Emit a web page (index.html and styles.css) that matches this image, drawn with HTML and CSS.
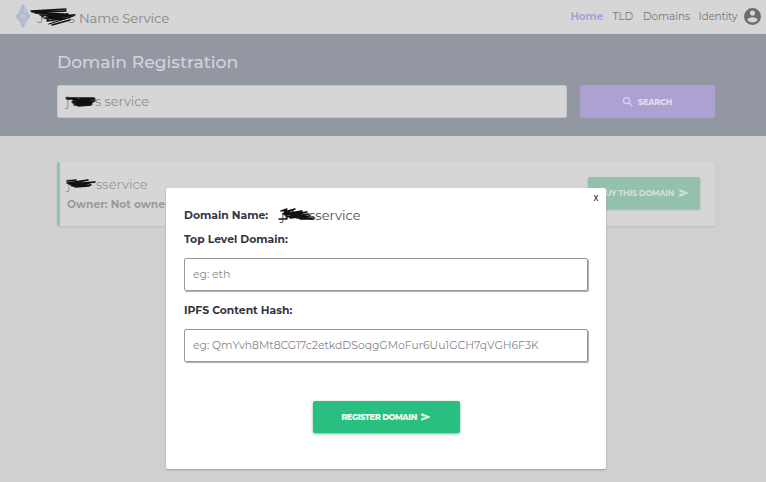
FILE: index.html
```html
<!DOCTYPE html>
<html lang="en">
<head>
<meta charset="utf-8">
<title>Name Service</title>
<link rel="stylesheet" href="styles.css">
</head>
<body>
<header class="topbar">
  <svg class="logo" viewBox="0 0 14 24"><path d="M7 .5 13.500 12 7 23.500.5 12Z" fill="#bac7d8" stroke="#a9b5c6" stroke-width=".7"/><path d="M7 .5V9L.5 12Z" fill="#b0c3d9"/><path d="M7 9 13.500 12 7 15.500.5 12ZM7 .5V9M.5 13.500 7 17.500l6.500-4M7 17.500v6" fill="none" stroke="#b29daf" stroke-width=".6"/></svg>
  <div class="brand"><span class="brand-prefix"><span>J</span><span>s</span></span><span class="brand-name">Name Service</span>
    <svg class="mark mark-brand" viewBox="0 0 48 20"><path d="M1 4 36 2M2 5 36 4 5 6 34 7M10 8 38 7 16 9 45 8 18 10 43 9 35 12 14 11 38 11 17 14 31 12M15 4 12 10 20 5 17 13 27 7 23 14M19 17 41 10M22 18 40 13"/></svg></div>
  <nav class="nav"><a class="nav-home">Home</a><a class="nav-tld">TLD</a><a class="nav-domains">Domains</a><a class="nav-identity">Identity</a></nav>
  <svg class="avatar" viewBox="2 2 20 20"><path fill="#6c6c6c" d="M12 2a10 10 0 1 0 0 20 10 10 0 0 0 0-20zm0 3a3 3 0 1 1 0 6 3 3 0 0 1 0-6zm0 14.200A7.200 7.200 0 0 1 6 16c0-2 4-3.100 6-3.100s6 1.100 6 3.100a7.200 7.200 0 0 1-6 3.200z"/></svg>
</header>
<section class="hero">
  <h1><span>Domain Registration</span></h1>
  <div class="search">
    <div class="search-field"><span class="search-prefix">j</span><span class="search-value">s service</span>
      <svg class="mark mark-search" viewBox="0 0 34 13"><path d="M1 3 29 3M2 4 12 4M8 5 30 4 7 7 30 6 8 8 28 7 9 10 27 9 13 11 26 10M8 5 11 10M11 4 14 10M16 3 20 10M23 3 26 9"/></svg></div>
    <button class="search-button"><svg class="icon-search" viewBox="3 3 18 18"><path d="M15.500 14h-.79l-.28-.27A6.500 6.500 0 1 0 13.730 14.430l.27.280v.79l5 5L20.490 19zM9.500 14a4.500 4.500 0 1 1 0-9 4.500 4.500 0 0 1 0 9z"/></svg><span class="search-label">SEARCH</span></button>
  </div>
</section>
<main class="results">
  <article class="result">
    <div class="result-text">
      <div class="result-name"><span class="result-prefix">j</span><span class="result-value">sservice</span>
        <svg class="mark mark-result" viewBox="0 0 34 12"><path d="M1 3 10 2M1 5 22 2 3 6 29 4 5 7 24 5 6 8 25 7 9 9 23 8"/></svg></div>
      <div class="owner"><span class="owner-label">Owner: Not owned</span></div>
    </div>
    <button class="buy"><span class="buy-label">BUY THIS DOMAIN</span><svg class="icon-send" viewBox="2 3 21 18"><path d="M2 21 23 12 2 3v7l15 2-15 2z"/></svg></button>
  </article>
</main>
<div class="modal">
  <button class="close">x</button>
  <div class="name-row"><b class="name-label">Domain Name:</b><span class="name-value"><span class="name-prefix">j</span><span class="name-rest">sservice</span>
    <svg class="mark mark-name" viewBox="0 0 42 15"><path d="M3 4 9 2 6 5 17 2 5 7 24 4 7 8 29 5 8 10 31 7 12 11 32 9 19 11 36 11 22 12 35 12M1 12 9 12M8 3 9 12M14 3 18 10"/></svg></span></div>
  <label class="tld-label"><span>Top Level Domain:</span></label>
  <div class="field"><span class="tld-hint">eg: eth</span></div>
  <label class="hash-label"><span>IPFS Content Hash:</span></label>
  <div class="field"><span class="hash-hint">eg: QmYvh8Mt8CG17c2etkdDSoqgGMoFur6Uu1GCH7qVGH6F3K</span></div>
  <button class="register"><span class="register-label">REGISTER DOMAIN</span><svg class="icon-send" viewBox="2 3 21 18"><path d="M2 21 23 12 2 3v7l15 2-15 2z"/></svg></button>
</div>
</body>
</html>
```
FILE: styles.css
```css
*{box-sizing:border-box}
body{margin:0;width:766px;height:482px;overflow:hidden;position:relative;background:#d0d0d0;font-family:Montserrat,Inter,sans-serif;color:#77777b;white-space:nowrap}
button{font:inherit;border:0;padding:0;display:flex;align-items:center}
svg{display:block;flex:none}
.topbar{height:34px;background:#d6d6d6;display:flex;align-items:center;padding:0 5px 0 16px}
.logo{width:14px;height:24px;margin-top:-2px}
.brand{position:relative;display:flex;margin-left:7px;font-size:13.200px;line-height:20px;margin-top:2px;font-weight:400;color:#858588}
.brand-prefix{display:flex;justify-content:space-between;width:38px;margin-right:4px}
.brand-name{letter-spacing:-.12px}
.mark{position:absolute;fill:none;stroke:#111;stroke-width:1.300;stroke-linejoin:round;stroke-linecap:round}
.mark-brand{left:-7px;top:-1px;width:48px;height:20px}
.nav{display:flex;margin-left:auto;font-size:10.500px;font-weight:400;line-height:16px;color:#77777a;margin-top:-1px;letter-spacing:-.1px}
.nav-home{width:42px;font-weight:700;color:#ad9fdb;letter-spacing:-.15px}
.nav-tld{width:30.500px}.nav-domains{width:55.500px}.nav-identity{width:45.500px;letter-spacing:-.2px}
.avatar{width:17px;height:17px;margin-top:-1px}
.hero{height:102px;background:#9297a2;padding:17px 51px 0 57px}
h1{margin:0 0 12px;font-size:17.200px;font-weight:500;line-height:22px;color:#d2d4d8}
.search{display:flex;justify-content:space-between}
.search-field{position:relative;display:flex;align-items:center;width:510px;height:33px;background:#d6d6d6;border:1px solid #c4c5c8;border-radius:2px;padding-left:8px;font-size:12.800px;font-weight:400;color:#8c8c8f}
.search-prefix{width:29px}
.mark-search{left:7px;top:9px;width:34px;height:13px}
.search-button{width:135px;height:33px;justify-content:center;background:#ada1d4;border-radius:2px;color:#dedbe7;font-size:8.200px;font-weight:800;letter-spacing:-.35px}
.icon-search{width:10px;height:10px;margin-right:5px;fill:#dedbe7}
.results{padding:26px 51px 0 57px}
.result{height:64px;background:#d6d6d6;border-left:3px solid #8fc5aa;border-radius:2px;box-shadow:0 1px 2px #bdbdbd;display:flex;justify-content:space-between;padding:15px 15px 0 7px}
.result-name{position:relative;display:flex;font-size:13px;line-height:15px;font-weight:400;color:#97979a}
.result-prefix{width:29px}
.mark-result{left:-1px;top:1px;width:34px;height:12px;stroke-width:1.600}
.owner{font-size:10.700px;font-weight:700;line-height:15px;margin-top:5px;color:#9a9a9c}
.buy{width:112px;height:32px;background:#94c1ad;border-radius:2px;box-shadow:0 1px 2px #a4b1aa;color:#d4dfd9;font-size:8.200px;font-weight:700;letter-spacing:-.3px;justify-content:flex-end;padding-right:11px}
.icon-send{width:10px;height:8px;margin-left:5px;fill:currentColor}
.modal{position:absolute;left:166px;top:188px;width:440px;height:281px;background:#fff;border-radius:2px;box-shadow:0 1px 2px #999;padding:18px 18px 0;color:#35353f;font-size:10.800px;font-weight:700}
.close{position:absolute;right:7.500px;top:4px;background:none;color:#222;font-family:"Liberation Sans",sans-serif;font-size:10px;line-height:12px;font-weight:400}
.name-row{display:flex;height:18px;align-items:center}
.name-label{width:97px;font-weight:700}
.name-value{position:relative;display:flex;font-size:13px;font-weight:400;color:#4b4b53}
.name-prefix{width:28px}
.mark-name{left:-3px;top:0;width:42px;height:15px;stroke-width:1.400}
.tld-label,.hash-label{display:block;line-height:16px}
.tld-label{margin:8px 0 10px}
.hash-label{margin:12px 0 10px}
.field{height:33px;border:1px solid #98989b;border-radius:2px;box-shadow:1px 1px 1px #aaa;display:flex;align-items:center;padding-left:8px;font-size:10.800px;font-weight:400;color:#85858a}
.register{width:147px;height:32px;margin:39px auto 0;background:#29bf80;color:#eefbf4;border-radius:2px;box-shadow:0 1px 3px #8daa9c;justify-content:center;font-size:8.200px;font-weight:800;letter-spacing:-.45px}
.register .icon-send{margin-left:4px}
```
